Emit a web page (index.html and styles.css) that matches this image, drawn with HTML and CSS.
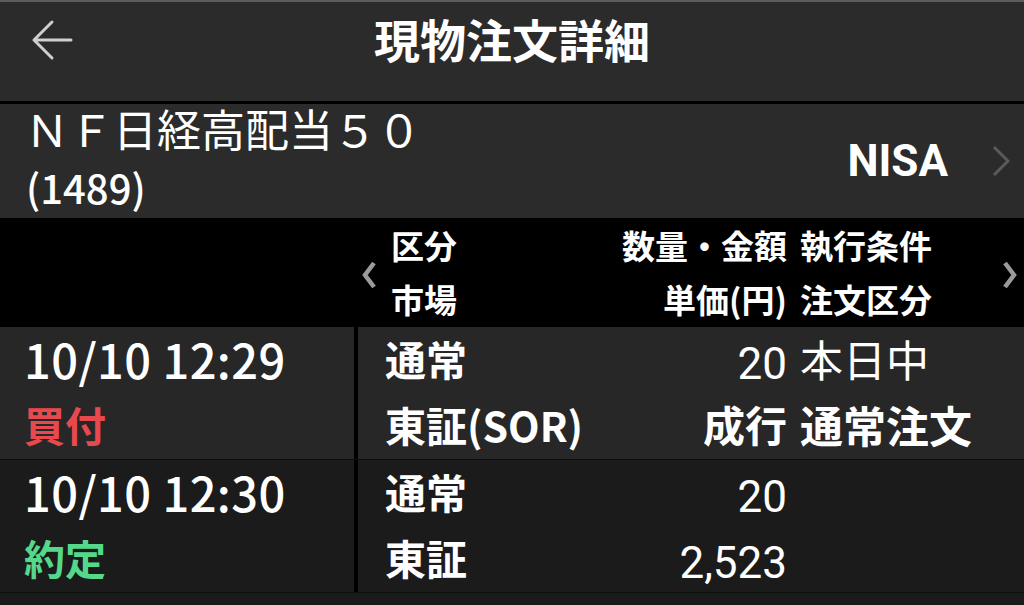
FILE: index.html
```html
<!DOCTYPE html>
<html lang="ja">
<head>
<meta charset="utf-8">
<title>現物注文詳細</title>
<link rel="stylesheet" href="styles.css">
</head>
<body>
<div class="topline"></div>
<header class="appbar">
  <div class="appbar-left">
    <svg class="back" width="42" height="42" viewBox="0 0 42 42"><path d="M40 21 H3 M21 3 L3 21 L21 39" fill="none" stroke="#cfcfcf" stroke-width="3" stroke-linecap="round" stroke-linejoin="round"/></svg>
  </div>
  <h1 class="title">現物注文詳細</h1>
  <div class="appbar-right"></div>
</header>
<section class="info">
  <div class="info-name">
    <div class="name">ＮＦ日経高配当５０</div>
    <div class="code">(1489)</div>
  </div>
  <div class="info-acct">
    <span class="nisa">NISA</span>
    <svg class="chev-info" width="18" height="32" viewBox="0 0 18 32"><path d="M2 2 L16 16 L2 30" fill="none" stroke="#5a5a5a" stroke-width="3"/></svg>
  </div>
</section>
<section class="grid thead">
  <div class="th-blank"></div>
  <div class="th-gutter">
    <svg width="16" height="30" viewBox="0 0 16 30"><path d="M13 3 L4 15 L13 27" fill="none" stroke="#9a9a9a" stroke-width="4.5"/></svg>
  </div>
  <div class="col-a th-a"><div class="hl">区分</div><div class="hl">市場</div></div>
  <div class="col-b"><div class="hl">数量・金額</div><div class="hl">単価(円)</div></div>
  <div class="col-c th-c">
    <div class="th-c-text"><div class="hl">執行条件</div><div class="hl">注文区分</div></div>
    <svg width="18" height="30" viewBox="0 0 18 30"><path d="M3 3 L12 15 L3 27" fill="none" stroke="#9a9a9a" stroke-width="4.5"/></svg>
  </div>
</section>
<section class="grid row row-1">
  <div class="cell-left">
    <div class="ln time">10/10 12:29</div>
    <div class="ln side buy">買付</div>
  </div>
  <div class="divider"></div>
  <div class="gutter"></div>
  <div class="col-a"><div class="ln strong">通常</div><div class="ln strong">東証(SOR)</div></div>
  <div class="col-b"><div class="ln num">20</div><div class="ln strong">成行</div></div>
  <div class="col-c"><div class="ln light">本日中</div><div class="ln strong">通常注文</div></div>
</section>
<section class="grid row row-2">
  <div class="cell-left">
    <div class="ln time">10/10 12:30</div>
    <div class="ln side done">約定</div>
  </div>
  <div class="divider"></div>
  <div class="gutter"></div>
  <div class="col-a"><div class="ln strong">通常</div><div class="ln strong">東証</div></div>
  <div class="col-b"><div class="ln num">20</div><div class="ln num">2,523</div></div>
  <div class="col-c"><div class="ln"></div><div class="ln"></div></div>
</section>
</body>
</html>
```
FILE: styles.css
```css
* { box-sizing: border-box; }
html, body {
  margin: 0;
  padding: 0;
}
body {
  width: 1024px;
  height: 605px;
  overflow: hidden;
  background: #1b1b1b;
  color: #fff;
  font-family: "Noto Sans CJK JP", "Noto Sans", sans-serif;
}
.topline {
  height: 2px;
  background: #5c5c5c;
}
.appbar {
  height: 102px;
  background: #2b2b2b;
  display: grid;
  grid-template-columns: 1fr auto 1fr;
  align-items: start;
  border-bottom: 3px solid #000;
}
.appbar-left {
  padding: 17px 0 0 31px;
}
.back { display: block; }
.title {
  margin: 13px 0 0;
  font-size: 46px;
  line-height: 1;
  font-weight: 700;
  color: #fff;
  letter-spacing: 0;
}
.info {
  height: 114px;
  background: #2b2b2b;
  display: flex;
  justify-content: space-between;
  align-items: stretch;
  padding-left: 28px;
}
.info-name {
  display: flex;
  flex-direction: column;
}
.name {
  margin-top: 2px;
  margin-left: -3px;
  font-size: 44px;
  line-height: 1;
  font-weight: 400;
}
.code {
  margin-top: 17px;
  margin-left: -2px;
  font-size: 40px;
  line-height: 1;
  font-weight: 500;
}
.info-acct {
  display: flex;
  align-items: center;
  padding-right: 14px;
}
.nisa {
  font-family: Roboto, "Noto Sans", sans-serif;
  font-weight: 700;
  font-size: 44px;
  line-height: 1;
  margin-right: 44px;
}
.chev-info { display: block; }

.grid {
  display: grid;
  grid-template-columns: 354px 4px 27px 210px 192px 1fr;
}
.thead {
  height: 109px;
  background: #000;
}
.th-blank { grid-column: 1 / 3; }
.th-gutter {
  display: flex;
  align-items: center;
  padding-left: 3px;
}
.th-gutter svg { display: block; margin-top: 4px; }
.hl {
  height: 54px;
  display: flex;
  align-items: center;
  font-size: 33px;
  line-height: 1;
  font-weight: 700;
}
.th-a { padding-left: 6px; }
.col-b .hl, .col-b .ln { justify-content: flex-end; }
.col-c { padding-left: 13px; }
.th-c {
  display: flex;
  justify-content: space-between;
  align-items: center;
  padding-right: 4px;
}
.th-c svg { display: block; margin-top: 4px; }

.row-1 { background: #272727; border-bottom: 1px solid #0e0e0e; }
.row-2 { background: #1b1b1b; border-bottom: 1px solid #0e0e0e; }
.cell-left { padding-left: 24px; }
.divider { background: #000; }
.ln {
  height: 66px;
  display: flex;
  align-items: center;
  padding-bottom: 4px;
  font-size: 42px;
  line-height: 1;
  white-space: nowrap;
}
.col-a .ln { font-size: 41px; }
.col-c .ln { font-size: 43px; }
.time { font-size: 47px; font-weight: 500; letter-spacing: 0.4px; }
.side { font-weight: 700; font-size: 41px; }
.buy { color: #e8494f; }
.done { color: #55d88b; }
.strong { font-weight: 700; }
.light { font-weight: 400; }
.col-b .num {
  font-family: Roboto, "Noto Sans", sans-serif;
  font-weight: 400;
  font-size: 44px;
  padding-bottom: 0;
  padding-top: 8px;
}
```
